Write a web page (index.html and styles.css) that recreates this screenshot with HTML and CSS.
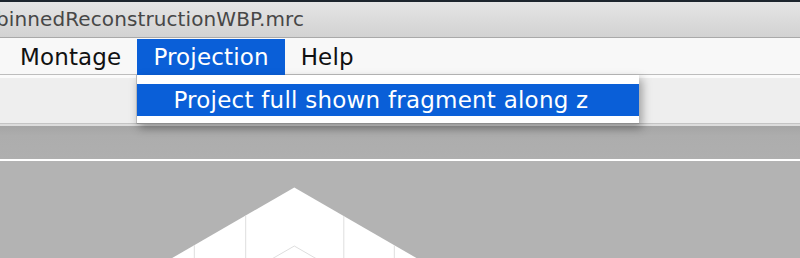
FILE: index.html
```html
<!DOCTYPE html>
<html>
<head>
<meta charset="utf-8">
<link rel="stylesheet" href="styles.css">
</head>
<body>
<div class="window">
  <div class="topstrip"></div>
  <div class="titlebar"><span class="title">binnedReconstructionWBP.mrc</span></div>
  <div class="menubar">
    <div class="menu">Montage</div>
    <div class="menu active">Projection
      <div class="dropdown">
        <div class="item selected">Project full shown fragment along z</div>
      </div>
    </div>
    <div class="menu">Help</div>
  </div>
  <div class="toolbar"></div>
  <div class="band"></div>
  <div class="canvas">
    <svg class="scene" width="800" height="97" viewBox="0 0 800 97">
      <polygon points="294.3,26.5 480,133.7 108.6,133.7" fill="#ffffff"/>
      <g stroke="#dedede" stroke-width="1" fill="none">
        <line x1="245.7" y1="54.6" x2="245.7" y2="97"/>
        <line x1="343.8" y1="55.1" x2="343.8" y2="97"/>
        <line x1="194.3" y1="84.2" x2="194.3" y2="97"/>
        <line x1="394.3" y1="84.2" x2="394.3" y2="97"/>
        <polyline points="270,99 294.3,85 318.6,99"/>
      </g>
    </svg>
  </div>
</div>
</body>
</html>
```

FILE: styles.css
```css
html, body {
  margin: 0;
  padding: 0;
  width: 800px;
  height: 258px;
  overflow: hidden;
  background: #b3b3b3;
}

.window {
  display: flex;
  flex-direction: column;
  width: 800px;
  height: 258px;
  font-family: "DejaVu Sans", "Verdana", sans-serif;
}

.topstrip {
  height: 2px;
  background: #1d252d;
}

.titlebar {
  height: 35px;
  border-bottom: 1px solid #a9a9a9;
  background: linear-gradient(#e5e5e5, #d2d2d2);
  overflow: hidden;
  white-space: nowrap;
}

.title {
  display: block;
  margin-left: -4px;
  font-size: 20px;
  letter-spacing: 0.1px;
  line-height: 35px;
  color: #474747;
}

.menubar {
  height: 37px;
  display: flex;
  padding-left: 4px;
  background: #f8f8f8;
  box-shadow: inset 0 -1px 0 #bdbdbd;
  position: relative;
  z-index: 2;
}

.menu {
  position: relative;
  margin-top: 1px;
  height: 36px;
  padding: 0 16px;
  font-size: 23px;
  letter-spacing: 0.15px;
  line-height: 36px;
  color: #111;
}

.menu.active {
  background: #0a5fd8;
  color: #fff;
}

.dropdown {
  position: absolute;
  left: -1px;
  top: 36px;
  width: 502px;
  padding: 9px 0 7px;
  background: #fff;
  border-left: 1px solid #b8b8b8;
  border-bottom: 1px solid #8e8e8e;
  box-shadow: 3px 4px 9px rgba(0, 0, 0, 0.35);
}

.item {
  height: 32px;
  padding-left: 36px;
  font-size: 23px;
  letter-spacing: 0.23px;
  line-height: 32px;
  color: #111;
  white-space: nowrap;
}

.item.selected {
  background: #0a5fd8;
  color: #fff;
}

.toolbar {
  height: 45px;
  border-top: 3px solid #fbfbfb;
  border-bottom: 1px solid #c4c4c4;
  background: #eeeeee;
}

.band {
  height: 33px;
  border-top: 2px solid #dcdcdc;
  border-bottom: 2px solid #ffffff;
  background: linear-gradient(#a5a5a5, #adadad 30%, #afafaf);
}

.canvas {
  flex: 1;
  background: #b3b3b3;
  overflow: hidden;
}

.scene {
  display: block;
}
```
